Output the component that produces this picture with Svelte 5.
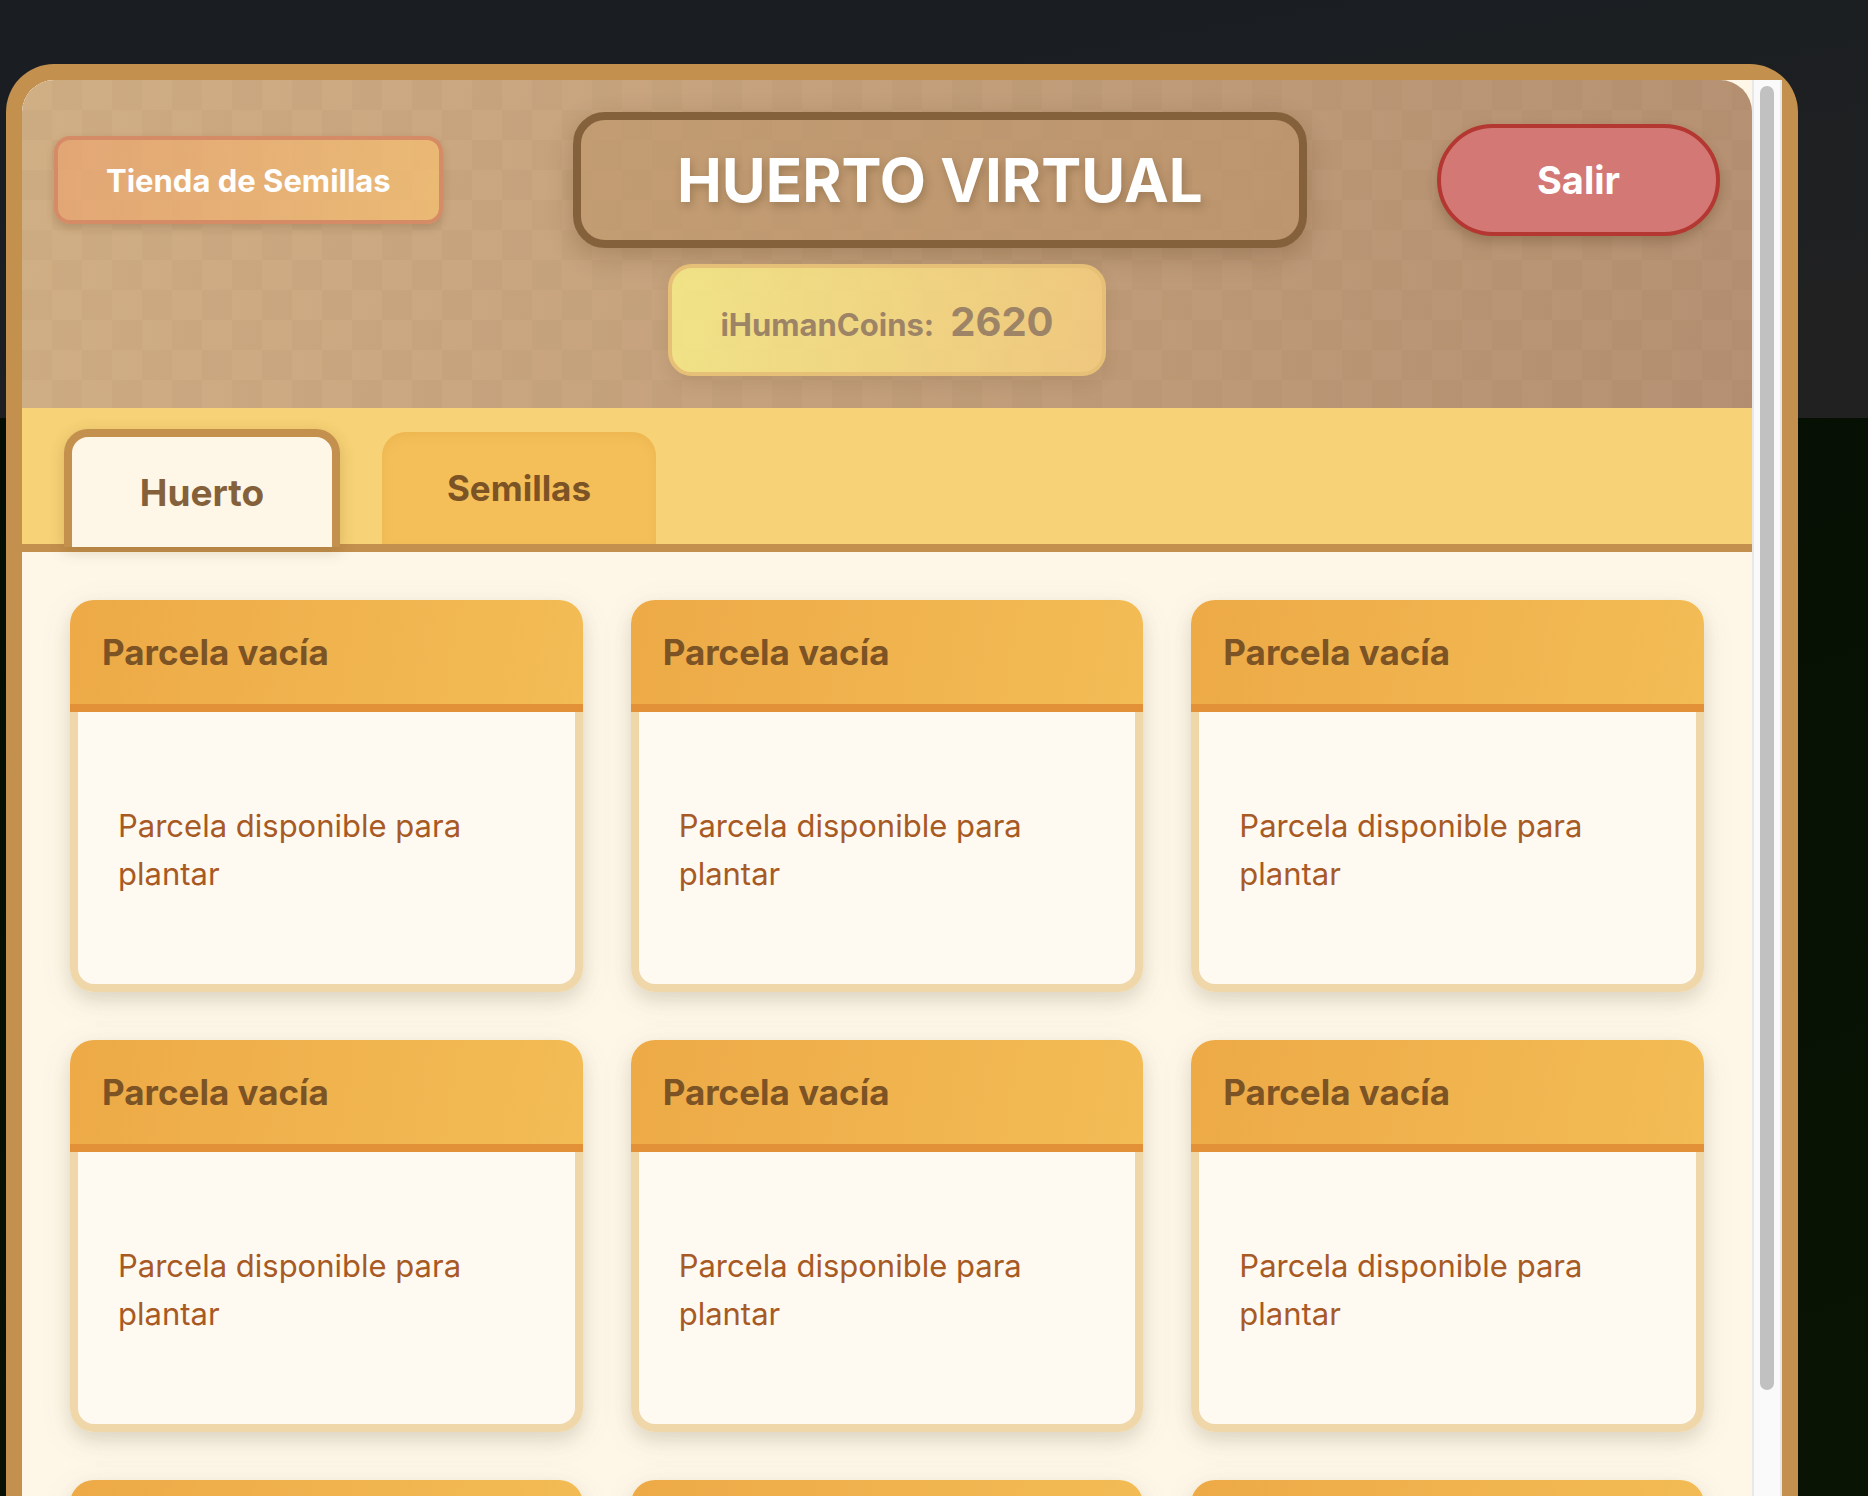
<script>
  const plots = Array.from({ length: 9 }, (_, i) => ({ id: i, title: 'Parcela vacía', text: 'Parcela disponible para plantar' }));
  const tabs = ['Huerto', 'Semillas'];
  let active = $state('Huerto');
  let coins = $state(2620);
</script>

<div class="page">
  <main class="frame">
    <div class="content">
      <header class="header">
        <div class="topbar">
          <button class="shop" type="button">Tienda de Semillas</button>
          <h1>HUERTO VIRTUAL</h1>
          <button class="exit" type="button">Salir</button>
        </div>
        <div class="coins"><span>iHumanCoins:</span><strong>{coins}</strong></div>
      </header>

      <nav class="tabs">
        {#each tabs as tab (tab)}
          <button type="button" class="tab" class:active={active === tab} onclick={() => (active = tab)}>{tab}</button>
        {/each}
      </nav>

      <section class="plots">
        {#each plots as plot (plot.id)}
          <article class="plot">
            <h2>{plot.title}</h2>
            <div class="plot-body"><p>{plot.text}</p></div>
          </article>
        {/each}
      </section>
    </div>
    <div class="scroll-track" aria-hidden="true"><div class="scroll-thumb"></div></div>
  </main>
</div>

<style>
  :global(body) {
    margin: 0;
    overflow: hidden;
  }

  .page {
    box-sizing: border-box;
    display: flex;
    height: 100vh;
    padding: 64px 70px 0 6px;
    overflow: hidden;
    background:
      linear-gradient(170deg, #1a1e22 30%, #212121 90%) top / 100% 418px no-repeat,
      linear-gradient(160deg, #020c03, #091404);
    font-family: Inter, 'Noto Sans', sans-serif;
  }

  .page * {
    box-sizing: border-box;
  }

  button {
    font-family: inherit;
    cursor: pointer;
  }

  /* The left half backs the rounded header corner, the right half the cream notch by the scrollbar. */
  .frame {
    flex: 1;
    display: flex;
    min-width: 0;
    border: 16px solid #c4904d;
    border-bottom: 0;
    border-radius: 48px 48px 0 0;
    background: linear-gradient(#c4904d, #c4904d) left / 50% 100% no-repeat, #fef7e8;
    background-clip: padding-box;
  }

  .content {
    flex: 1;
    min-width: 0;
    overflow: hidden;
    border-radius: 32px 0 0 0;
    background: #fef7e8;
  }

  .header {
    display: flex;
    flex-direction: column;
    align-items: center;
    gap: 16px;
    padding: 32px;
    border-radius: 32px 32px 0 0;
    background:
      conic-gradient(rgba(110, 80, 40, 0.04) 25%, transparent 0 50%, rgba(110, 80, 40, 0.04) 0 75%, transparent 0) 0 0 / 60px 60px,
      linear-gradient(100deg, #d1af85, #b59072);
  }

  .topbar {
    display: flex;
    align-items: center;
    justify-content: space-between;
    width: 100%;
  }

  .shop {
    height: 88px;
    padding: 0 48px;
    border: 4px solid #d58b66;
    border-radius: 16px;
    background: linear-gradient(100deg, rgba(234, 164, 112, 0.7), rgba(249, 194, 112, 0.7));
    box-shadow: 0 4px 8px rgba(80, 60, 30, 0.2);
    color: #fff;
    font-size: 31px;
    font-weight: 700;
  }

  h1 {
    display: flex;
    align-items: center;
    height: 136px;
    margin: 0;
    padding: 0 96px;
    border: 8px solid #84613a;
    border-radius: 32px;
    background: rgba(189, 147, 104, 0.5);
    box-shadow: 0 8px 24px rgba(80, 50, 20, 0.25);
    color: #fff;
    font-size: 60px;
    font-weight: 700;
    text-shadow: 2px 4px 8px rgba(60, 40, 10, 0.25);
  }

  .exit {
    height: 112px;
    padding: 0 96px;
    border: 4px solid #b43732;
    border-radius: 56px;
    background: #d37875;
    box-shadow: 0 6px 12px rgba(60, 40, 10, 0.24);
    color: #fff;
    font-size: 38px;
    font-weight: 700;
  }

  .coins {
    display: flex;
    align-items: baseline;
    gap: 16px;
    height: 112px;
    padding: 32px 48px;
    border: 4px solid #e7c077;
    border-radius: 24px;
    background: linear-gradient(100deg, rgba(255, 248, 138, 0.75), rgba(255, 214, 128, 0.75));
    box-shadow: 0 8px 16px rgba(90, 60, 30, 0.1);
    color: #9d8466;
    font-size: 31px;
    font-weight: 700;
    line-height: 44px;
  }

  .coins strong {
    font-size: 40px;
    font-weight: 700;
  }

  .tabs {
    display: flex;
    align-items: flex-end;
    gap: 42px;
    height: 144px;
    padding: 0 42px;
    border-bottom: 8px solid #c4904d;
    background: #f7d276;
  }

  .tab {
    height: 112px;
    min-width: 274px;
    padding: 0 60px;
    border: 0;
    border-radius: 24px 24px 0 0;
    background: #f4bf59;
    box-shadow: inset 0 4px 12px rgba(200, 130, 30, 0.14);
    color: #7c5325;
    font-size: 35px;
    font-weight: 700;
  }

  .tab.active {
    position: relative;
    min-width: 276px;
    height: 118px;
    margin-bottom: -3px;
    border: 8px solid #c4904d;
    border-bottom: 0;
    background: #fef7e8;
    box-shadow: 0 4px 16px rgba(90, 60, 10, 0.2);
    color: #84613a;
    font-size: 37px;
  }

  .plots {
    display: grid;
    grid-template-columns: repeat(3, 1fr);
    gap: 48px;
    padding: 48px;
  }

  .plot {
    border-radius: 24px;
    box-shadow: 0 8px 32px rgba(110, 100, 60, 0.1), 0 8px 16px rgba(110, 110, 80, 0.15);
  }

  h2 {
    height: 112px;
    margin: 0;
    padding: 0 32px;
    border-bottom: 8px solid #e39138;
    border-radius: 24px 24px 0 0;
    background: linear-gradient(100deg, #edaa47, #f3bc55);
    color: #7c5325;
    font-size: 35px;
    font-weight: 700;
    line-height: 104px;
  }

  .plot-body {
    display: flex;
    align-items: center;
    height: 280px;
    padding: 4px 40px 0;
    border: 8px solid #efd7a9;
    border-top: 0;
    border-radius: 0 0 24px 24px;
    background: #fef9f1;
  }

  p {
    margin: 0;
    color: #a85a24;
    font-size: 31px;
    line-height: 48px;
  }

  .scroll-track {
    width: 30px;
    padding: 6px 6px 106px;
    border: 2px solid #e8e8ea;
    border-width: 0 2px;
    background: #fafafa;
  }

  .scroll-thumb {
    width: 100%;
    height: 100%;
    border-radius: 8px;
    background: #c1c1c1;
  }
</style>
